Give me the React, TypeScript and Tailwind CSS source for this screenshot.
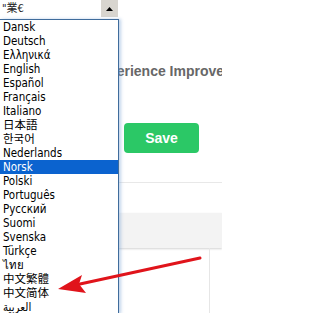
const languages = [
  "Dansk",
  "Deutsch",
  "Ελληνικά",
  "English",
  "Español",
  "Français",
  "Italiano",
  "日本語",
  "한국어",
  "Nederlands",
  "Norsk",
  "Polski",
  "Português",
  "Русский",
  "Suomi",
  "Svenska",
  "Türkçe",
  "ไทย",
  "中文繁體",
  "中文简体",
  "العربية",
];

const selected = "Norsk";

export default function App() {
  return (
    <div className="relative w-[222px] h-[313px] overflow-hidden bg-white font-['DejaVu_Sans_Condensed','Liberation_Sans','Noto_Sans_CJK_JP',sans-serif]">
      {/* Top bar with the select box */}
      <div className="flex h-[19px] items-start">
        <div className="flex w-[118px] h-[17px] items-center justify-between">
          <span className="pl-[2px] text-[11px] leading-[17px] text-[#222]">"業€</span>
          <div className="flex h-[17px] w-[17px] items-center justify-center bg-[#d8d5cf]">
            <svg width="7" height="4" viewBox="0 0 7 4">
              <polygon points="3.5,0 7,4 0,4" fill="#000" />
            </svg>
          </div>
        </div>
      </div>

      {/* Page content behind the open list */}
      <div className="flex h-[294px] flex-col">
        <div className="pt-[43px] pl-[91px]">
          <h2 className="whitespace-nowrap font-['Liberation_Sans',sans-serif] text-[14px] font-bold leading-[18px] text-[#676767]">
            Experience Improvement
          </h2>
        </div>
        <div className="mt-[43px] pl-[124px]">
          <button className="flex h-[30px] w-[75px] items-center justify-center rounded-[4px] bg-[#2bc866] font-['Liberation_Sans',sans-serif] text-[14px] font-bold text-white">
            Save
          </button>
        </div>
        <div className="mt-[29px] border-t border-[#e8e8e8]" />
        <div className="mt-[30px] h-[35px] bg-[#f3f3f3] shadow-[0_1px_2px_rgba(0,0,0,0.18)]" />
        <div className="flex-1 pl-[209px]">
          <div className="h-full border-l border-[#e6e6e6]" />
        </div>
      </div>

      {/* Open dropdown list */}
      <ul className="absolute left-0 top-[19px] w-[119px] border-t border-r border-[#3f6c9c] bg-white shadow-[2px_0_3px_rgba(120,160,210,0.45)]">
        {languages.map((lang) => (
          <li
            key={lang}
            className={
              lang === selected
                ? "h-[14px] whitespace-nowrap bg-[#0b63cf] pl-[3px] text-[11.5px] leading-[14px] text-white"
                : "h-[14px] whitespace-nowrap pl-[3px] text-[11.5px] leading-[14px] text-black"
            }
          >
            {lang}
          </li>
        ))}
      </ul>

      {/* Red annotation arrow */}
      <svg className="pointer-events-none absolute left-0 top-0" width="222" height="313" viewBox="0 0 222 313">
        <line x1="200" y1="258" x2="80" y2="284" stroke="#e0141b" strokeWidth="3" strokeLinecap="round" />
        <polygon points="58,289 82,275 79,284 86,293" fill="#e0141b" />
      </svg>
    </div>
  );
}
